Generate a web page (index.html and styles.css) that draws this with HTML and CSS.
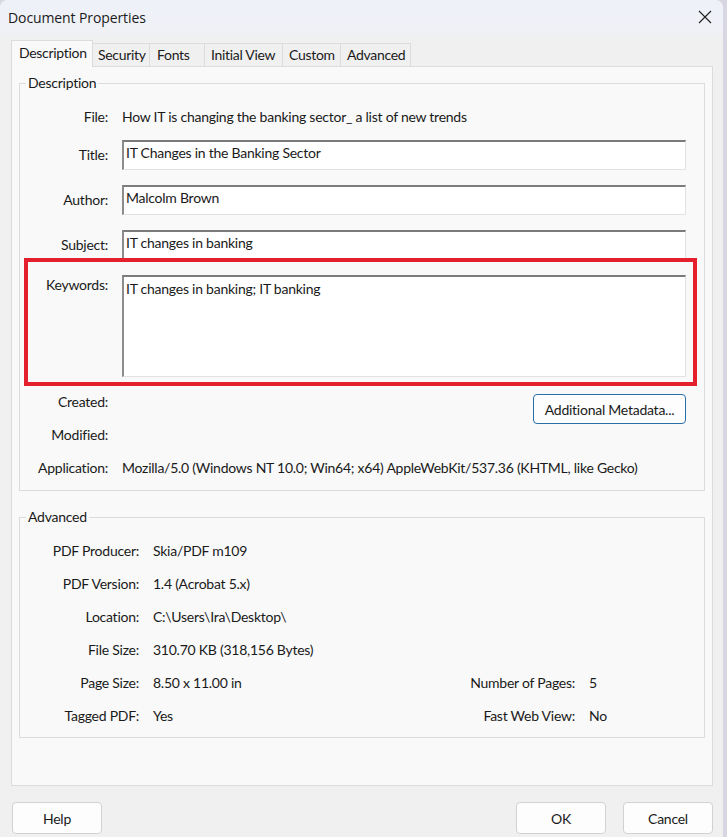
FILE: index.html
```html
<!DOCTYPE html>
<html lang="en">
<head>
<meta charset="utf-8">
<title>Document Properties</title>
<link rel="stylesheet" href="styles.css">
</head>
<body>
<div class="window">
  <div class="titlebar">
    <span class="title">Document Properties</span>
    <svg class="close" width="14" height="14" viewBox="0 0 14 14"><path d="M1 1L13 13M13 1L1 13" stroke="#1f1f1f" stroke-width="1.1" fill="none"/></svg>
  </div>
  <div class="tabs">
    <div class="tab active">Description</div>
    <div class="tab t-sec">Security</div>
    <div class="tab t-fonts">Fonts</div>
    <div class="tab t-initial">Initial View</div>
    <div class="tab t-custom">Custom</div>
    <div class="tab t-adv">Advanced</div>
  </div>
  <div class="panel">
    <fieldset class="group desc">
      <legend>Description</legend>
      <div class="drow file-row">
        <div class="lbl">File:</div>
        <div class="val">How IT is changing the banking sector_ a list of new trends</div>
      </div>
      <div class="drow">
        <div class="lbl">Title:</div>
        <div class="inp">IT Changes in the Banking Sector</div>
      </div>
      <div class="drow">
        <div class="lbl">Author:</div>
        <div class="inp">Malcolm Brown</div>
      </div>
      <div class="drow">
        <div class="lbl">Subject:</div>
        <div class="inp">IT changes in banking</div>
      </div>
      <div class="drow kw-row">
        <div class="lbl kw-lbl">Keywords:</div>
        <div class="inp area">IT changes in banking; IT banking</div>
        <div class="highlight"></div>
      </div>
      <div class="drow created-row">
        <div class="lbl top-lbl">Created:</div>
        <button class="btn meta">Additional Metadata...</button>
      </div>
      <div class="drow small-row">
        <div class="lbl">Modified:</div>
      </div>
      <div class="drow small-row app-row">
        <div class="lbl">Application:</div>
        <div class="val">Mozilla/5.0 (Windows NT 10.0; Win64; x64) AppleWebKit/537.36 (KHTML, like Gecko)</div>
      </div>
    </fieldset>
    <fieldset class="group adv">
      <legend>Advanced</legend>
      <div class="agrid">
        <div class="albl">PDF Producer:</div><div class="aval">Skia/PDF m109</div><div></div><div></div>
        <div class="albl">PDF Version:</div><div class="aval">1.4 (Acrobat 5.x)</div><div></div><div></div>
        <div class="albl">Location:</div><div class="aval">C:\Users\Ira\Desktop\</div><div></div><div></div>
        <div class="albl">File Size:</div><div class="aval">310.70 KB (318,156 Bytes)</div><div></div><div></div>
        <div class="albl">Page Size:</div><div class="aval">8.50 x 11.00 in</div><div class="albl">Number of Pages:</div><div class="aval">5</div>
        <div class="albl">Tagged PDF:</div><div class="aval">Yes</div><div class="albl">Fast Web View:</div><div class="aval">No</div>
      </div>
    </fieldset>
  </div>
  <div class="buttons">
    <button class="btn dlg">Help</button>
    <div class="spacer"></div>
    <button class="btn dlg">OK</button>
    <button class="btn dlg">Cancel</button>
  </div>
</div>
</body>
</html>
```

FILE: styles.css
```css
html, body {
  margin: 0;
  padding: 0;
  background: #d8d6e2;
}
body {
  font-family: Lato, "Liberation Sans", sans-serif;
  font-size: 14px;
  line-height: 18px;
  letter-spacing: -0.25px;
  color: #1a1a1a;
}
.window {
  width: 723px;
  height: 837px;
  background: #f0f0f0;
  border-radius: 8px 8px 0 0;
  overflow: hidden;
  display: flex;
  flex-direction: column;
}
.titlebar {
  height: 40px;
  flex: none;
  display: flex;
  align-items: center;
  justify-content: space-between;
  padding: 0 11px 0 8px;
  box-sizing: border-box;
  background: linear-gradient(#eef1f8, #eff1f6 70%, #f0f0f0);
}
.title {
  font-family: "Open Sans", Lato, sans-serif;
  font-size: 14px;
  letter-spacing: -0.1px;
  color: #1b1b1b;
  margin-top: -4px;
}
.close {
  margin-top: -6px;
}
.tabs {
  display: flex;
  align-items: flex-end;
  height: 26px;
  padding-left: 11px;
  flex: none;
  position: relative;
  z-index: 1;
}
.tab {
  height: 23px;
  box-sizing: border-box;
  padding: 2px 0 0 6px;
  border: 1px solid #dcdcdc;
  border-bottom: none;
  border-left: none;
  background: #f0f0f0;
  letter-spacing: -0.3px;
  color: #1a1a1a;
  white-space: nowrap;
}
.tab.active {
  height: 27px;
  margin-bottom: -1px;
  background: #f9f9f9;
  border-left: 1px solid #dcdcdc;
  padding: 3px 0 0 7px;
  width: 82px;
}
.t-sec { width: 57px; padding-left: 5px; }
.t-fonts { width: 55px; padding-left: 7px; }
.t-initial { width: 78px; }
.t-custom { width: 58px; }
.t-adv { width: 70px; }
.panel {
  margin: 0 10px 0 11px;
  height: 720px;
  box-sizing: border-box;
  background: #f9f9f9;
  border: 1px solid #dcdcdc;
  padding: 7px 7px 0;
  flex: none;
}
.group {
  margin: 0;
  border: 1px solid #dcdcdc;
  padding: 0 18px 0 4px;
  min-width: 0;
}
.group legend {
  padding: 0 2px;
  margin-left: 2px;
  line-height: 18px;
}
.desc {
  padding-top: 10px;
  padding-bottom: 11px;
}
.drow {
  display: flex;
  align-items: center;
  gap: 14px;
  min-height: 30px;
  margin-bottom: 15px;
  position: relative;
}
.file-row { margin-bottom: 8px; }
.lbl {
  width: 84px;
  flex: none;
  text-align: right;
}
.val {
  white-space: nowrap;
}
.inp {
  flex: 1;
  height: 30px;
  box-sizing: border-box;
  background: #ffffff;
  border-top: 2px solid #7b7b7b;
  border-left: 2px solid #8c8c8c;
  border-right: 1px solid #e2e2e2;
  border-bottom: 1px solid #e2e2e2;
  padding: 2px 3px 0 2px;
  white-space: nowrap;
}
.kw-row {
  align-items: flex-start;
  margin-bottom: 17px;
}
.kw-lbl { margin-top: 1px; }
.area {
  height: 102px;
  padding-top: 3px;
}
.highlight {
  position: absolute;
  left: 0;
  right: -11px;
  top: -17px;
  bottom: -9px;
  border: 4px solid #e3202c;
  pointer-events: none;
}
.created-row {
  align-items: flex-start;
  margin-bottom: 0;
}
.top-lbl { margin-top: -1px; }
.btn {
  font-family: inherit;
  font-size: 14px;
  letter-spacing: -0.25px;
  color: #1a1a1a;
  background: #fdfdfd;
  border: 1px solid #d2d2d2;
  border-radius: 4px;
  padding: 0;
  cursor: default;
}
.meta {
  margin-left: auto;
  width: 153px;
  height: 30px;
  border-color: #2a6fa9;
}
.small-row {
  min-height: 22px;
  margin-bottom: 11px;
}
.app-row { margin-bottom: 0; }
.adv {
  margin-top: 17px;
  padding: 8px 0 5px 4px;
}
.agrid {
  display: grid;
  grid-template-columns: 115px 1fr auto 115px;
  grid-auto-rows: 33px;
  column-gap: 14px;
  align-items: center;
}
.albl {
  text-align: right;
  white-space: nowrap;
}
.aval {
  white-space: nowrap;
}
.buttons {
  display: flex;
  gap: 17px;
  margin: 16px 10px 0 12px;
}
.spacer { flex: 1; }
.dlg {
  width: 90px;
  height: 32px;
}
```
